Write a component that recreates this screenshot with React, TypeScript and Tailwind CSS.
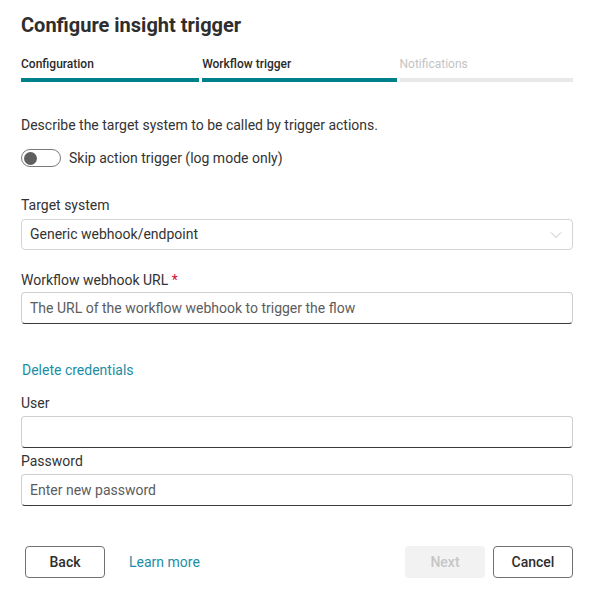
import React from "react";

const TABS = [
  { label: "Configuration", done: true },
  { label: "Workflow trigger", done: true },
  { label: "Notifications", done: false },
];

function Label({ children, className = "" }: { children: React.ReactNode; className?: string }) {
  return <div className={"text-[14px] leading-[20px] text-[#333] " + className}>{children}</div>;
}

function TextInput({ placeholder, className = "" }: { placeholder?: string; className?: string }) {
  return (
    <div
      className={
        "h-[32px] w-full rounded-[4px] border border-[#cfcfcf] border-b-[#3a3a3a] px-[8px] flex items-center text-[14px] text-[#5c5c5c] " +
        className
      }
    >
      {placeholder}
    </div>
  );
}

export default function App() {
  return (
    <div className="w-[594px] h-[599px] bg-white px-[21px] font-['Roboto',sans-serif] text-[#333]">
      {/* Header */}
      <h1 className="pt-[11px] h-[39px] leading-[28px] text-[20px] font-bold text-[#2e2e2e]">
        Configure insight trigger
      </h1>

      {/* Stepper */}
      <div className="mt-[17px] flex gap-[3px]">
        {TABS.map((t) => (
          <div key={t.label} className="flex-auto">
            <div
              className={
                "text-[12px] leading-[16px] font-medium " + (t.done ? "text-[#2a2a2a]" : "text-[#c4c4c4] font-normal")
              }
            >
              {t.label}
            </div>
            <div className={"mt-[6px] h-[4px] " + (t.done ? "bg-[#00808a]" : "bg-[#e8e8e8]")} />
          </div>
        ))}
      </div>

      <Label className="mt-[33px]">Describe the target system to be called by trigger actions.</Label>

      {/* Toggle */}
      <div className="mt-[13px] flex items-center gap-[8px]">
        <div className="h-[18px] w-[40px] rounded-full border-[1.5px] border-[#7a7a7a] bg-white flex items-center px-[2px]">
          <div className="h-[13px] w-[13px] rounded-full bg-[#5f5f5f]" />
        </div>
        <span className="text-[14px] leading-[20px] text-[#333]">Skip action trigger (log mode only)</span>
      </div>

      {/* Target system */}
      <Label className="mt-[27px]">Target system</Label>
      <div className="mt-[4px] h-[31px] rounded-[4px] border border-[#d4d4d4] px-[8px] flex items-center justify-between text-[14px] text-[#333]">
        <span>Generic webhook/endpoint</span>
        <svg width="12" height="8" viewBox="0 0 12 8" className="mr-[2px]">
          <path d="M1 1.5 L6 6.5 L11 1.5" fill="none" stroke="#c2c2c2" strokeWidth="1" />
        </svg>
      </div>

      <Label className="mt-[20px]">
        Workflow webhook URL <span className="text-[#d0103a]">*</span>
      </Label>
      <TextInput className="mt-[2px]" placeholder="The URL of the workflow webhook to trigger the flow" />

      <div className="mt-[36px] text-[14px] leading-[20px] text-[#1a8ea6] ml-[1px]">Delete credentials</div>

      <Label className="mt-[13px]">User</Label>
      <TextInput className="mt-[3px]" />

      <Label className="mt-[3px]">Password</Label>
      <TextInput className="mt-[3px]" placeholder="Enter new password" />

      {/* Footer */}
      <div className="mt-[40px] flex items-center pl-[4px]">
        <button className="h-[32px] w-[80px] rounded-[4px] border border-[#707070] text-[14px] font-medium text-[#2e2e2e]">
          Back
        </button>
        <span className="ml-[24px] text-[14px] text-[#1a8ea6]">Learn more</span>
        <div className="flex-1" />
        <button className="h-[32px] w-[80px] rounded-[4px] bg-[#f2f2f2] text-[14px] font-medium text-[#c6c6c6]">
          Next
        </button>
        <button className="ml-[8px] h-[32px] w-[80px] rounded-[4px] border border-[#707070] text-[14px] font-medium text-[#2e2e2e]">
          Cancel
        </button>
      </div>
    </div>
  );
}
